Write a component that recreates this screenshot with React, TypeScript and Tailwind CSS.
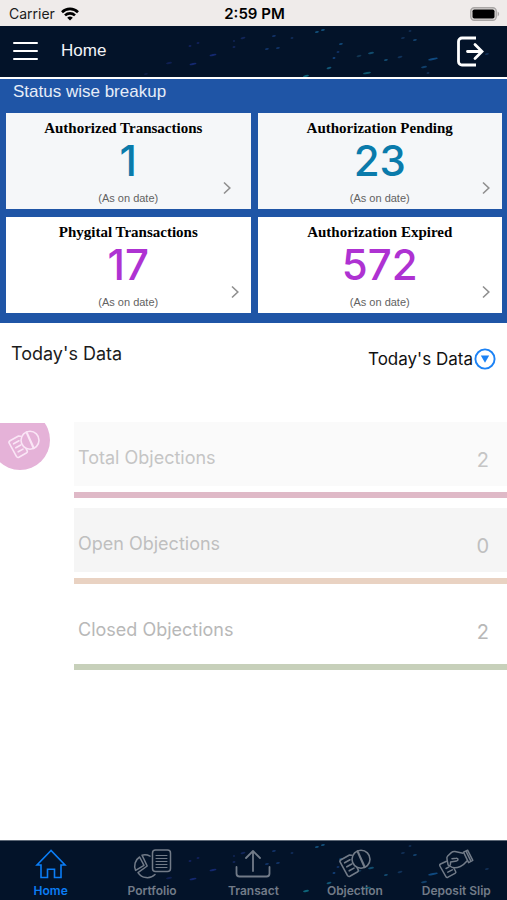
import type { ReactNode } from "react";

const inter = "font-['Inter','Liberation_Sans',sans-serif]";
const arial = "font-['Liberation_Sans',sans-serif]";
const serif = "font-['Liberation_Serif',serif]";

const specks: [number, number, number, string][] = [
  [190, 20, 3, "#17276f"], [198, 17, 3, "#16266a"], [213, 29, 7, "#1a2f86"], [193, 38, 7, "#1a2f86"],
  [169, 37, 6, "#13245f"], [234, 15, 2, "#172c68"], [234, 21, 3, "#172c68"], [243, 12, 5, "#172c68"],
  [274, 10, 4, "#163a78"], [292, 12, 3, "#143466"], [317, 6, 4, "#176090"], [323, 4, 4, "#176090"],
  [267, 23, 4, "#153c78"], [278, 22, 4, "#153c78"], [341, 18, 4, "#15558a"], [338, 26, 3, "#153c78"],
  [334, 32, 3, "#174e90"], [359, 30, 5, "#16405f"], [371, 27, 6, "#176084"], [386, 34, 4, "#175a84"],
  [400, 31, 5, "#153c68"], [415, 14, 4, "#174e80"], [403, 12, 4, "#153660"], [410, 5, 3, "#153660"],
  [433, 33, 10, "#145c9c"], [424, 41, 6, "#154e80"], [367, 47, 8, "#126d83"], [329, 42, 5, "#176d90"],
  [306, 50, 6, "#128094"], [487, 28, 4, "#153660"], [428, 47, 3, "#153660"], [146, 48, 4, "#101f4c"],
];

function Specks() {
  return (
    <svg
      className="absolute inset-0 size-full opacity-75"
      viewBox="0 0 507 60"
      preserveAspectRatio="xMidYMin slice"
      aria-hidden="true"
    >
      {specks.map(([x, y, w, color]) => (
        <ellipse key={`${x}-${y}`} cx={x} cy={y} rx={w / 2} ry={1} fill={color} transform={`rotate(-12 ${x} ${y})`} />
      ))}
    </svg>
  );
}

function StatusBar() {
  return (
    <div className={`${inter} grid h-[26px] grid-cols-3 items-center bg-[#efebea] pr-[7px] pl-[9px] pt-[2px] text-[14px] leading-[20px] text-[#1c1c1c]`}>
      <div className="flex items-center gap-[6px]">
        <span>Carrier</span>
        <svg width="18" height="14" viewBox="0 0 18 14" fill="none" stroke="#000" strokeWidth="2.6" aria-hidden="true">
          <path d="M1 5.2a11.4 11.4 0 0 1 16 0" />
          <path d="M4 8.4a7.2 7.2 0 0 1 10 0" />
          <path d="M9 13.6 6.2 10.8a4 4 0 0 1 5.6 0z" fill="#000" stroke="none" />
        </svg>
      </div>
      <span className="text-center text-[15px] font-semibold text-black">2:59 PM</span>
      <svg className="justify-self-end" width="30" height="14" viewBox="0 0 30 14" aria-hidden="true">
        <rect x="0.75" y="0.75" width="25.5" height="12.5" rx="3.5" fill="#dedad9" stroke="#a9a6a5" strokeWidth="1.3" />
        <rect x="2.5" y="2.5" width="22" height="9" rx="1.8" fill="#000" />
        <path d="M27.6 4.6c2 .8 2 4 0 4.8z" fill="#a9a6a5" />
      </svg>
    </div>
  );
}

type Stat = {
  title: string;
  value: string;
  card: string;
  number: string;
  titleBox?: string;
  chevronBox?: string;
};

const stats: Stat[] = [
  { title: "Authorized Transactions", value: "1", card: "bg-[#f5f7f9]", number: "text-[#0a7bab]", titleBox: "pr-[10px]", chevronBox: "pr-[20px]" },
  { title: "Authorization Pending", value: "23", card: "bg-[#f5f7f9]", number: "text-[#0a7bab]" },
  { title: "Phygital Transactions", value: "17", card: "bg-white", number: "text-[#ae32d2]" },
  { title: "Authorization Expired", value: "572", card: "bg-white", number: "text-[#ae32d2]" },
];

function StatCard({ title, value, card, number, titleBox = "", chevronBox = "pr-[12px]" }: Stat) {
  return (
    <button type="button" className={`flex h-24 flex-col pt-[6px] text-center ${card}`}>
      <span className={`${serif} w-full text-[15px] leading-[18px] font-bold text-black ${titleBox}`}>{title}</span>
      <span className={`${inter} h-11 w-full text-[42px] leading-[48px] font-medium ${number}`}>{value}</span>
      <span className="grid h-[24px] w-full grid-cols-[1fr_auto_1fr]">
        <span className={`${arial} col-start-2 self-end text-[11px] leading-[14px] text-[#626262]`}>(As on date)</span>
        <span className={`justify-self-end ${chevronBox}`}>
          <svg width="8" height="14" viewBox="0 0 8 14" fill="none" stroke="#8f8f8f" strokeWidth="1.6" aria-hidden="true">
            <path d="M1 1.5 6.8 7 1 12.5" />
          </svg>
        </span>
      </span>
    </button>
  );
}

function ObjectionGlyph() {
  return (
    <svg width="32" height="30" viewBox="0 0 32 30" fill="none" stroke="currentColor" strokeWidth="1.6" strokeLinecap="round" strokeLinejoin="round" aria-hidden="true">
      <path d="M12.600 6.200 10.500 6 2 10.800c-1 .6-1.300 1.500-.8 2.400l7.200 13.200c.6 1 1.500 1.300 2.500.8l7.400-4.200c1-.6 1.300-1.400.8-2.400L18.200 18.800" />
      <path d="M5.600 13.800 11 10.800M7.800 17.800l5-2.800M10.200 21.800l4.800-2.700" />
      <circle cx="22" cy="10.200" r="9" />
      <path d="M18.600 2.400 25.600 18" strokeWidth="2.200" />
    </svg>
  );
}

const objections = [
  { label: "Total Objections", value: "2", fill: "bg-[#fafafa]", bar: "bg-[#dfb9c7]", text: "text-[#c5c5c5]" },
  { label: "Open Objections", value: "0", fill: "bg-[#f5f5f5]", bar: "bg-[#e9d2c2]", text: "text-[#bfbfbf]" },
  { label: "Closed Objections", value: "2", fill: "bg-white", bar: "bg-[#c7d0ba]", text: "text-[#b8b8b8]" },
];

const tabs: { label: string; icon: ReactNode; active?: boolean }[] = [
  {
    label: "Home",
    active: true,
    icon: (
      <svg width="32" height="30" viewBox="0 0 32 30" fill="none" stroke="currentColor" strokeWidth="1.6" strokeLinejoin="miter" aria-hidden="true">
        <path d="M16 1.500 2 16H6V28.500h6.500v-8.200h7v8.200H26V16h4z" />
      </svg>
    ),
  },
  {
    label: "Portfolio",
    icon: (
      <svg width="40" height="30" viewBox="0 0 40 30" fill="none" stroke="currentColor" strokeWidth="1.5" strokeLinejoin="round" strokeLinecap="round" aria-hidden="true">
        <rect x="20.500" y="1" width="18" height="21.500" rx="3" />
        <path d="M24 6.500h11M24 9.500h11M24 12.500h11M24 15.500h11M24 18.500h11" strokeWidth="1" />
        <path d="M18 7.200A11 11 0 0 0 10 6.200L15.200 17 6 23.600A11 11 0 0 0 23 25.500" />
        <path d="M7.600 8A10.800 10.800 0 0 0 3.600 21.400L12 16.400z" />
      </svg>
    ),
  },
  {
    label: "Transact",
    icon: (
      <svg width="36" height="30" viewBox="0 0 36 30" fill="none" stroke="currentColor" strokeWidth="1.8" strokeLinejoin="round" strokeLinecap="round" aria-hidden="true">
        <path d="M18 22V2M11 9l7-7 7 7M1.500 18v6.500a3 3 0 0 0 3 3h27a3 3 0 0 0 3-3V18" />
      </svg>
    ),
  },
  { label: "Objection", icon: <ObjectionGlyph /> },
  {
    label: "Deposit Slip",
    icon: (
      <svg width="36" height="30" viewBox="0 0 36 30" fill="none" stroke="currentColor" strokeWidth="1.5" strokeLinejoin="round" strokeLinecap="round" aria-hidden="true">
        <path d="M8.500 12.200 2.600 15c-.9.500-1.200 1.100-.7 2l6 10.600c.5.900 1.200 1 2.100.600l7-3.800c.9-.5 1.100-1.200.6-2.100L16 19.500" />
        <path d="M8 19.500l3-1.600M9.800 23.200l4.500-2.400" />
        <path d="M25 4.200 17 2.600c-1.500-.3-2.500 0-3.700 1L9.700 7c-1 1-1 2-.7 3.200l1 5.300c.3 1.500 2.200 1.500 2.400 0l.2-2.500 5.900-1c2.200-.4 1.800-3-.3-2.700l-4.200.4" />
        <path d="M11.800 17c3 2.500 7 2 10.500.5 2.800-1.200 4.600-3 6.700-5.500" />
        <path d="M25.500 3.200 29.600 1.200 34.800 11.400 30.600 13.600zM28 2.200l5 10.200" />
      </svg>
    ),
  },
];

export default function App() {
  return (
    <div className="flex min-h-screen flex-col bg-white">
      <StatusBar />

      <header className="relative h-[51px] overflow-hidden bg-[#031329]">
        <Specks />
        <div className="relative flex h-full items-center pr-[23px] pb-[2px] pl-[13px]">
          <button type="button" aria-label="Open menu" className="flex w-[25px] flex-col gap-[6px]">
            <span className="h-[2px] rounded-full bg-white" />
            <span className="h-[2px] rounded-full bg-white" />
            <span className="h-[2px] rounded-full bg-white" />
          </button>
          <h1 className={`${arial} ml-[23px] flex-1 text-[17px] leading-[20px] text-[#f3f5f8]`}>Home</h1>
          <button type="button" aria-label="Log out" className="text-white">
            <svg width="28" height="32" viewBox="0 0 28 32" fill="none" stroke="currentColor" strokeWidth="2.800" strokeLinecap="butt" aria-hidden="true">
              <path d="M20 3H6a3.500 3.500 0 0 0-3.500 3.500v20A3.500 3.500 0 0 0 6 30h14" />
              <path d="M11.500 16.500H25.500M19 9.500l7 7-7 7" strokeLinecap="round" />
            </svg>
          </button>
        </div>
      </header>

      <main className="flex-1">
        <section className="mt-[2px] bg-[#1f55a6] pr-[5px] pb-[10px] pl-[6px]">
          <h2 className={`${arial} h-[34px] pt-[3px] pl-[7px] text-[17px] leading-[20px] text-[#e6edf8]`}>Status wise breakup</h2>
          <div className="grid grid-cols-2 gap-x-[7px] gap-y-[8px]">
            {stats.map((stat) => (
              <StatCard key={stat.title} {...stat} />
            ))}
          </div>
        </section>

        <div className={`${inter} flex justify-between pt-[20px] pr-[11px] pl-[11px] text-[#1c1c1c]`}>
          <h2 className="text-[18px] leading-[22px]">Today's Data</h2>
          <div className="relative mt-[4px] flex">
            <select
              aria-label="Data period"
              defaultValue="today"
              className="appearance-none bg-transparent pr-[23px] text-[17px] leading-[24px] text-[#111]"
            >
              <option value="today">Today's Data</option>
            </select>
            <svg className="pointer-events-none absolute right-0 top-px" width="22" height="22" viewBox="0 0 22 22" aria-hidden="true">
              <circle cx="11" cy="11" r="9.600" fill="none" stroke="#1b82f5" strokeWidth="1.900" />
              <path d="M6.800 7.600h8.400L11 14.800z" fill="#1b82f5" />
            </svg>
          </div>
        </div>

        <section className="mt-[51px] flex">
          <div className="w-[74px] shrink-0">
            <div className="mt-px h-[47px] w-[50px] overflow-hidden">
              <div className="-mt-[13px] -ml-[10px] flex size-[60px] items-center justify-center rounded-full bg-[#e5b2d8] pt-[10px] pl-[8px] text-[#fae6f6]">
                <ObjectionGlyph />
              </div>
            </div>
          </div>
          <dl className={`${inter} flex flex-1 flex-col gap-[10px]`}>
            {objections.map(({ label, value, fill, bar, text }) => (
              <div key={label}>
                <div className={`flex h-16 items-center justify-between pt-[8px] pr-[18px] pl-[4px] ${fill} ${text}`}>
                  <dt className="text-[18px] leading-[22px]">{label}</dt>
                  <dd className="pt-[4px] text-[20px] leading-[24px]">{value}</dd>
                </div>
                <div className={`mt-[6px] h-[6px] ${bar}`} />
              </div>
            ))}
          </dl>
        </section>
      </main>

      <nav className="relative h-[60px] overflow-hidden border-t border-[#5d6876] bg-[#031329]">
        <Specks />
        <ul className="relative grid grid-cols-5">
          {tabs.map(({ label, icon, active }) => (
            <li key={label}>
              <a
                href="#"
                aria-current={active ? "page" : undefined}
                className={`${inter} flex flex-col items-center gap-[4px] pt-[8px] text-[12px] leading-[16px] font-semibold ${active ? "text-[#0b7df5]" : "text-[#727b88]"}`}
              >
                {icon}
                <span>{label}</span>
              </a>
            </li>
          ))}
        </ul>
      </nav>
    </div>
  );
}
